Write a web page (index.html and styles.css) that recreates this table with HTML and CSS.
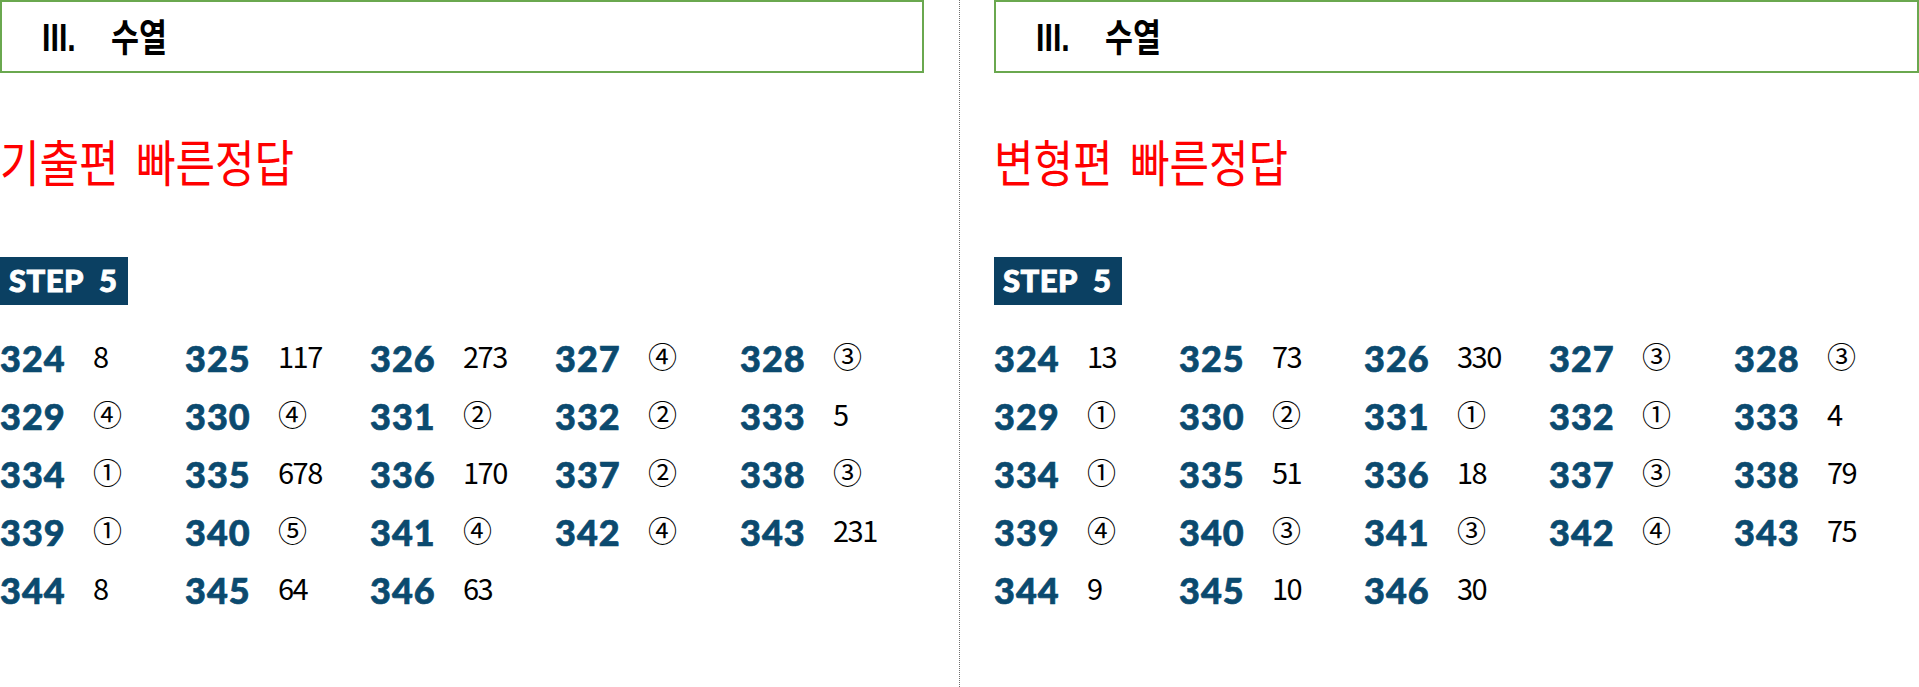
FILE: index.html
```html
<!DOCTYPE html>
<html lang="ko">
<head>
<meta charset="utf-8">
<title>수열 빠른정답</title>
<link rel="stylesheet" href="styles.css">
</head>
<body>
<div class="page">
  <section class="col">
    <div class="unit-box"><span class="unit-text"><span class="roman">III.</span><span class="unit-name">수열</span></span></div>
    <h1 class="title"><span class="title-text">기출편 <span class="title-gap"></span>빠른정답</span></h1>
    <div class="step">STEP 5</div>
    <div class="answers">
      <div class="cell"><span class="q">324</span><span class="a">8</span></div>
      <div class="cell"><span class="q">325</span><span class="a">117</span></div>
      <div class="cell"><span class="q">326</span><span class="a">273</span></div>
      <div class="cell"><span class="q">327</span><span class="a">④</span></div>
      <div class="cell"><span class="q">328</span><span class="a">③</span></div>
      <div class="cell"><span class="q">329</span><span class="a">④</span></div>
      <div class="cell"><span class="q">330</span><span class="a">④</span></div>
      <div class="cell"><span class="q">331</span><span class="a">②</span></div>
      <div class="cell"><span class="q">332</span><span class="a">②</span></div>
      <div class="cell"><span class="q">333</span><span class="a">5</span></div>
      <div class="cell"><span class="q">334</span><span class="a">①</span></div>
      <div class="cell"><span class="q">335</span><span class="a">678</span></div>
      <div class="cell"><span class="q">336</span><span class="a">170</span></div>
      <div class="cell"><span class="q">337</span><span class="a">②</span></div>
      <div class="cell"><span class="q">338</span><span class="a">③</span></div>
      <div class="cell"><span class="q">339</span><span class="a">①</span></div>
      <div class="cell"><span class="q">340</span><span class="a">⑤</span></div>
      <div class="cell"><span class="q">341</span><span class="a">④</span></div>
      <div class="cell"><span class="q">342</span><span class="a">④</span></div>
      <div class="cell"><span class="q">343</span><span class="a">231</span></div>
      <div class="cell"><span class="q">344</span><span class="a">8</span></div>
      <div class="cell"><span class="q">345</span><span class="a">64</span></div>
      <div class="cell"><span class="q">346</span><span class="a">63</span></div>
    </div>
  </section>
  <div class="divider"></div>
  <section class="col">
    <div class="unit-box"><span class="unit-text"><span class="roman">III.</span><span class="unit-name">수열</span></span></div>
    <h1 class="title"><span class="title-text">변형편 <span class="title-gap"></span>빠른정답</span></h1>
    <div class="step">STEP 5</div>
    <div class="answers">
      <div class="cell"><span class="q">324</span><span class="a">13</span></div>
      <div class="cell"><span class="q">325</span><span class="a">73</span></div>
      <div class="cell"><span class="q">326</span><span class="a">330</span></div>
      <div class="cell"><span class="q">327</span><span class="a">③</span></div>
      <div class="cell"><span class="q">328</span><span class="a">③</span></div>
      <div class="cell"><span class="q">329</span><span class="a">①</span></div>
      <div class="cell"><span class="q">330</span><span class="a">②</span></div>
      <div class="cell"><span class="q">331</span><span class="a">①</span></div>
      <div class="cell"><span class="q">332</span><span class="a">①</span></div>
      <div class="cell"><span class="q">333</span><span class="a">4</span></div>
      <div class="cell"><span class="q">334</span><span class="a">①</span></div>
      <div class="cell"><span class="q">335</span><span class="a">51</span></div>
      <div class="cell"><span class="q">336</span><span class="a">18</span></div>
      <div class="cell"><span class="q">337</span><span class="a">③</span></div>
      <div class="cell"><span class="q">338</span><span class="a">79</span></div>
      <div class="cell"><span class="q">339</span><span class="a">④</span></div>
      <div class="cell"><span class="q">340</span><span class="a">③</span></div>
      <div class="cell"><span class="q">341</span><span class="a">③</span></div>
      <div class="cell"><span class="q">342</span><span class="a">④</span></div>
      <div class="cell"><span class="q">343</span><span class="a">75</span></div>
      <div class="cell"><span class="q">344</span><span class="a">9</span></div>
      <div class="cell"><span class="q">345</span><span class="a">10</span></div>
      <div class="cell"><span class="q">346</span><span class="a">30</span></div>
    </div>
  </section>
</div>
</body>
</html>
```

FILE: styles.css
```css
html, body {
  margin: 0;
  padding: 0;
  background: #ffffff;
}

.page {
  display: grid;
  grid-template-columns: 924px 70px 925px;
  height: 687px;
  overflow: hidden;
}

.col {
  display: flex;
  flex-direction: column;
  align-items: flex-start;
}

.divider {
  justify-self: center;
  width: 0;
  height: 100%;
  border-left: 1px dotted #6f6f6f;
}

.unit-box {
  box-sizing: border-box;
  align-self: stretch;
  height: 73px;
  border: 2px solid #6aa84f;
  display: flex;
  align-items: center;
  padding-left: 40px;
}

.unit-text {
  display: inline-flex;
  align-items: baseline;
  transform: scaleX(0.8);
  transform-origin: left center;
  font-family: "Liberation Sans", "Noto Sans CJK KR", sans-serif;
  font-weight: 700;
  font-size: 38px;
  line-height: 1;
  color: #000;
}

.unit-name {
  margin-left: 44px;
  font-family: "Noto Sans CJK KR", sans-serif;
}

.title {
  margin: 62px 0 0 0;
  font-family: "Noto Sans CJK KR", sans-serif;
  font-weight: 400;
  font-size: 50px;
  line-height: 50px;
  color: #ff0000;
}

.title-text {
  display: inline-block;
  transform: scaleX(0.86);
  transform-origin: left center;
  white-space: nowrap;
}

.title-gap {
  display: inline-block;
  width: 6px;
}

.step {
  box-sizing: border-box;
  margin-top: 72px;
  width: 128px;
  height: 48px;
  padding: 0 0 3px 9px;
  display: flex;
  align-items: center;
  background: #0b4062;
  color: #ffffff;
  font-family: Lato, "Liberation Sans", sans-serif;
  font-weight: 900;
  font-size: 31px;
  letter-spacing: 0.5px;
  word-spacing: 8px;
  white-space: nowrap;
  -webkit-text-stroke: 0.9px #ffffff;
}

.answers {
  margin-top: 21px;
  display: grid;
  grid-template-columns: repeat(5, 185px);
  grid-auto-rows: 58px;
}

.cell {
  white-space: nowrap;
  line-height: 58px;
}

.q {
  display: inline-block;
  width: 93px;
  font-family: Lato, "Liberation Sans", sans-serif;
  font-weight: 900;
  font-size: 36px;
  letter-spacing: 1px;
  color: #0b4a6f;
  -webkit-text-stroke: 0.7px #0b4a6f;
}

.a {
  display: inline-block;
  vertical-align: 4px;
  font-family: "Noto Sans CJK KR", "Noto Sans", sans-serif;
  font-weight: 400;
  font-size: 29px;
  letter-spacing: -1.5px;
  color: #000;
}
```
